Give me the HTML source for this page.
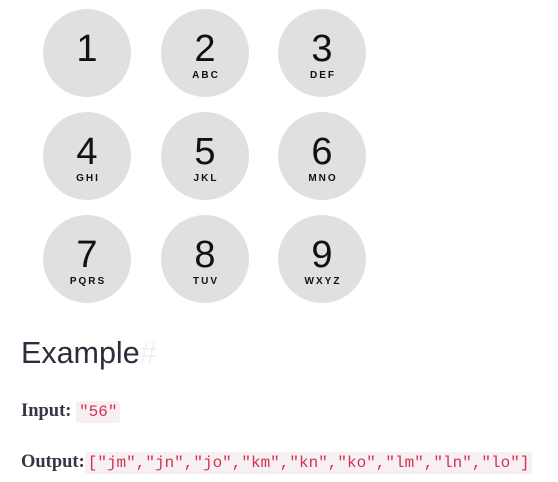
<!DOCTYPE html>
<html><head><style>
body{margin:0;width:558px;height:482px;background:#fff;position:relative;overflow:hidden;font-family:"Liberation Sans",sans-serif}
.c{position:absolute;width:88px;height:88px;border-radius:50%;background:#e0e0e0;text-align:center;color:#111}
.d{position:absolute;left:0;right:0;top:20px;font-size:38px;line-height:40px}
.l{position:absolute;left:0;right:0;top:61px;font-size:10px;font-weight:bold;letter-spacing:2px;padding-left:2px}
h2{position:absolute;left:21px;top:336px;margin:0;font-weight:normal;font-size:30.5px;color:#2c2f3a}
h2 span{color:#eef0f3}
p{position:absolute;left:21px;margin:0;font-family:"Liberation Serif",serif;font-weight:bold;font-size:18.5px;color:#333744}
code{font-family:"Liberation Mono",monospace;font-weight:normal;font-size:16px;color:#d63052;background:#f7f0f2;padding:2px 3px;border-radius:3px}
</style></head><body>
<div class="c" style="left:43px;top:9px"><div class="d">1</div></div>
<div class="c" style="left:161px;top:9px"><div class="d">2</div><div class="l">ABC</div></div>
<div class="c" style="left:278px;top:9px"><div class="d">3</div><div class="l">DEF</div></div>
<div class="c" style="left:43px;top:112px"><div class="d">4</div><div class="l">GHI</div></div>
<div class="c" style="left:161px;top:112px"><div class="d">5</div><div class="l">JKL</div></div>
<div class="c" style="left:278px;top:112px"><div class="d">6</div><div class="l">MNO</div></div>
<div class="c" style="left:43px;top:215px"><div class="d">7</div><div class="l">PQRS</div></div>
<div class="c" style="left:161px;top:215px"><div class="d">8</div><div class="l">TUV</div></div>
<div class="c" style="left:278px;top:215px"><div class="d">9</div><div class="l">WXYZ</div></div>
<h2>Example<span>#</span></h2>
<p style="top:401px">Input: <code>"56"</code></p>
<p style="top:452px">Output:<code>["jm","jn","jo","km","kn","ko","lm","ln","lo"]</code></p>
</body></html>
